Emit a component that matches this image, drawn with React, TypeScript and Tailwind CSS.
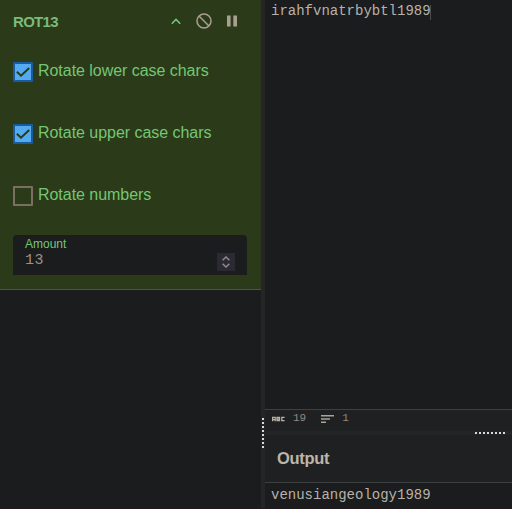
import React from "react";

const sans = "font-['Liberation_Sans',Arial,sans-serif]";
const mono = "font-['Liberation_Mono','Courier_New',monospace]";

function CheckRow({ label, checked }: { label: string; checked: boolean }) {
  return (
    <label className="flex h-[62px] items-start pl-[13px] text-[16px] leading-[20px] tracking-[-0.04px] text-[#73c774]">
      <span
        className={
          checked
            ? "mt-[1px] flex size-5 shrink-0 items-center justify-center rounded-[1px] border-2 border-[#155ca0] bg-[#55a9ee]"
            : "mt-[1px] size-5 shrink-0 rounded-[1px] border-2 border-[#7b6f61]"
        }
      >
        {checked && (
          <svg width="16" height="16" viewBox="0 0 16 16" fill="none">
            <path d="M1.9 7.8 6 11.7 14.2 4" stroke="#2b3a19" strokeWidth="2" />
          </svg>
        )}
      </span>
      <span className="ml-[5px] whitespace-nowrap">{label}</span>
    </label>
  );
}

function Operation() {
  return (
    <section className="h-[290px] border-b border-[#426124] bg-[#2b3a19]">
      <header className="flex h-[61px] items-start justify-between pl-[13px] pr-[24px]">
        <h2 className="mt-[12px] text-[15px] font-bold leading-[20px] tracking-[-0.7px] text-[#7abb7a]">ROT13</h2>
        <div className="mt-[10px] flex h-[22px] items-center">
          <svg width="10" height="7" viewBox="0 0 10 7" fill="none" className="mr-[15px]">
            <path d="M.8 5.7 5 1.5 9.2 5.7" stroke="#73c774" strokeWidth="1.6" />
          </svg>
          <svg width="16" height="16" viewBox="0 0 16 16" fill="none" stroke="#a99f91" strokeWidth="1.5" className="mr-[15px]">
            <circle cx="8" cy="8" r="7" />
            <path d="m3 3 10 10" />
          </svg>
          <svg width="10" height="12" viewBox="0 0 10 12" fill="#a99f91">
            <path d="M0 .5h3.6v11H0zM6.3.5H10v11H6.3z" />
          </svg>
        </div>
      </header>
      <CheckRow label="Rotate lower case chars" checked />
      <CheckRow label="Rotate upper case chars" checked />
      <div className="h-[50px]">
        <CheckRow label="Rotate numbers" checked={false} />
      </div>
      <div className="ml-[13px] mr-[14px] flex h-10 justify-between rounded-t-[4px] bg-[#1b1c1d] pl-[12px] pr-[12px]">
        <div>
          <div className="mt-[2px] text-[12px] leading-[14px] text-[#73c774]">Amount</div>
          <div className={`${mono} mt-px text-[15px] leading-[18px] tracking-[0.5px] text-[#9a9289]`}>13</div>
        </div>
        <div className="mt-[18px] flex h-[18px] w-[18px] items-center justify-center bg-[#2b2a33]">
          <svg width="8" height="12" viewBox="0 0 8 12" fill="none" stroke="#8e8b94" strokeWidth="1.5">
            <path d="M.6 4.2 4 1l3.4 3.2M.6 7.8 4 11l3.4-3.2" />
          </svg>
        </div>
      </div>
    </section>
  );
}

function StatusBar() {
  return (
    <div className={`flex h-[22px] items-start border-t border-[#3e4142] bg-[#1f2021] pl-[7px] text-[11px] leading-[13px] text-[#918a80] ${mono}`}>
      <svg width="13" height="6" viewBox="0 0 13 6" fill="none" stroke="#b8b1a6" strokeWidth="1.3" className="mt-[6px]">
        <path d="M.6 5.2V1.4h2.6v3.8M.6 3.6h2.6M5 1.3h2.5v3.4H5zM5 3h2.8M12.6 1.4H9.8v3.3h2.8" />
      </svg>
      <span className="ml-[8px] mt-[2px]">19</span>
      <svg width="13" height="9" viewBox="0 0 13 9" fill="#aaa398" className="ml-[15px] mt-[5px]">
        <path d="M0 0h13v1.5H0zM0 3.2h9v1.6H0zM0 6.5h5V8H0z" />
      </svg>
      <span className="ml-[8px] mt-[2px]">1</span>
    </div>
  );
}

export default function App() {
  return (
    <main className={`flex h-[509px] w-[512px] flex-col overflow-hidden bg-[#1b1c1d] ${sans}`}>
      <div className="flex h-[508px]">
        <div className="w-[261px] shrink-0">
          <Operation />
        </div>
        <div className="flex w-1 shrink-0 flex-col items-center bg-[#242527] pt-[418px]">
          <div className="h-[30px] w-[2px] bg-[repeating-linear-gradient(to_bottom,#d9d9d9_0px,#d9d9d9_2px,transparent_2px,transparent_4px)]" />
        </div>
        <div className="flex min-w-0 flex-1 flex-col">
          <div className={`flex h-[409px] items-start pl-[6px] pt-[2px] text-[14px] leading-[17px] text-[#b8b2aa] ${mono}`}>
            <span className="pt-px">irahfvnatrbybtl1989</span>
            <span className="-ml-px mt-[3px] h-[15px] w-px bg-[#494e51]" />
          </div>
          <StatusBar />
          <div className="h-1 bg-[#242527] pl-[210px] pt-px">
            <div className="h-[2px] w-[30px] bg-[repeating-linear-gradient(to_right,#d9d9d9_0px,#d9d9d9_2px,transparent_2px,transparent_4px)]" />
          </div>
          <div className="flex h-[48px] items-center border-b border-[#3e4142] bg-[#1f2021] pl-3 text-[16.5px] font-bold tracking-[-0.3px] text-[#bcb5aa]">
            Output
          </div>
          <div className={`pl-[6px] pt-1 text-[14px] leading-[17px] text-[#b8b2aa] ${mono}`}>venusiangeology1989</div>
        </div>
      </div>
      <div className="h-px bg-[#24191b]" />
    </main>
  );
}
